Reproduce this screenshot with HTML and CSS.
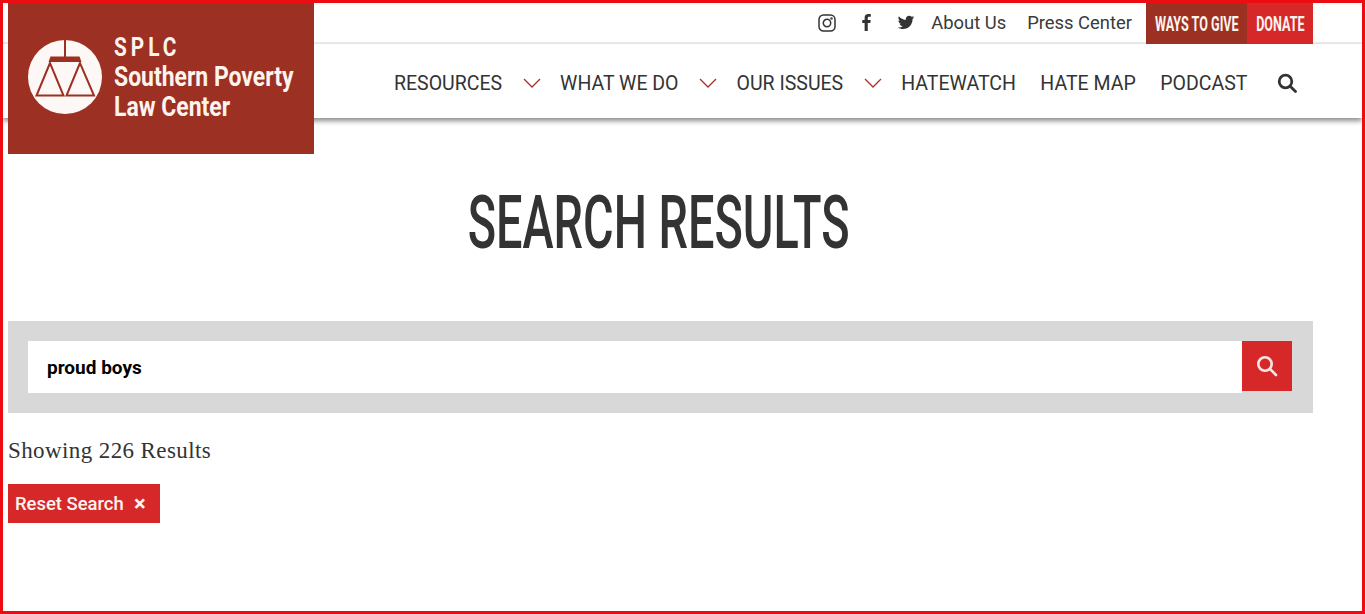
FILE: index.html
```html
<!DOCTYPE html>
<html lang="en">
<head>
    <meta charset="UTF-8">
    <meta name="viewport" content="width=device-width, initial-scale=1.0">
    <title>Search Results</title>
    <link rel="stylesheet" href="styles.css">
</head>
<body>
    <div class="frame">
        <header class="site-header">
            <a class="logo" href="#">
                <svg class="logo-mark" viewBox="0 0 74 74" width="74" height="74">
                    <circle cx="37" cy="37" r="37" fill="#fdf8f5"/>
                    <path d="M37 0V17" stroke="#9c3022" stroke-width="2" fill="none"/>
                    <path d="M20.500 22L22.500 16.500H51.500L53.500 22Z" fill="#9c3022"/>
                    <path d="M22 23L8.500 55.500H35.500ZM52 23L38.500 55.500H66Z" fill="none" stroke="#9c3022" stroke-width="2"/>
                </svg>
                <div class="logo-text">
                    <span class="logo-splc">SPLC</span>
                    <span class="logo-line">Southern Poverty</span>
                    <span class="logo-line">Law Center</span>
                </div>
            </a>

            <div class="top-bar">
                <a class="social social-wide" href="#" aria-label="Instagram">
                    <svg viewBox="0 0 18 18" width="18" height="18" fill="none" stroke="#333" stroke-width="1.500">
                        <rect x="1" y="1" width="16" height="16" rx="4.500"/>
                        <circle cx="9" cy="9" r="3.700"/>
                        <circle cx="13.500" cy="4.500" r="0.500"/>
                    </svg>
                </a>
                <a class="social" href="#" aria-label="Facebook">
                    <svg viewBox="0 0 12 20" width="12" height="19" fill="#333">
                        <path d="M3.500 19V10.500H1V7.300H3.500V5C3.500 2.300 5 1 7.400 1C8.500 1 9.600 1.100 10 1.200V4H8.300C7.100 4 6.800 4.600 6.800 5.500V7.300H9.900L9.500 10.500H6.800V19Z"/>
                    </svg>
                </a>
                <a class="social social-last" href="#" aria-label="Twitter">
                    <svg viewBox="0 0 24 24" width="19" height="19" fill="#333">
                        <path d="M23 5.100c-.8.4-1.700.6-2.600.7.900-.6 1.600-1.400 2-2.500-.9.500-1.900.9-2.900 1.100C18.700 3.500 17.500 3 16.200 3c-2.500 0-4.500 2-4.500 4.500 0 .4 0 .7.100 1C8 8.300 4.700 6.500 2.500 3.800c-.4.700-.6 1.400-.6 2.300 0 1.600.8 2.900 2 3.700-.7 0-1.400-.2-2-.6v.1c0 2.200 1.600 4 3.600 4.400-.4.100-.8.200-1.200.2-.3 0-.6 0-.8-.1.600 1.800 2.200 3.100 4.200 3.100-1.500 1.200-3.500 1.900-5.600 1.900-.4 0-.7 0-1.100-.1 2 1.300 4.400 2 6.900 2 8.300 0 12.800-6.900 12.800-12.800v-.6c.9-.6 1.700-1.400 2.300-2.200z"/>
                    </svg>
                </a>
                <a class="top-link" href="#">About Us</a>
                <a class="top-link top-link-last" href="#">Press Center</a>
                <a class="cta cta-give" href="#"><span>WAYS TO GIVE</span></a>
                <a class="cta cta-donate" href="#"><span>DONATE</span></a>
            </div>

            <nav class="main-nav">
                <a class="nav-link" href="#">RESOURCES</a>
                <svg class="chevron" viewBox="0 0 18 10" width="18" height="10"><path d="M1 1L9 9L17 1" fill="none" stroke="#a8322a" stroke-width="1.300"/></svg>
                <a class="nav-link" href="#">WHAT WE DO</a>
                <svg class="chevron" viewBox="0 0 18 10" width="18" height="10"><path d="M1 1L9 9L17 1" fill="none" stroke="#a8322a" stroke-width="1.300"/></svg>
                <a class="nav-link" href="#">OUR ISSUES</a>
                <svg class="chevron" viewBox="0 0 18 10" width="18" height="10"><path d="M1 1L9 9L17 1" fill="none" stroke="#a8322a" stroke-width="1.300"/></svg>
                <a class="nav-link" href="#">HATEWATCH</a>
                <a class="nav-link plain" href="#">HATE MAP</a>
                <a class="nav-link plain" href="#">PODCAST</a>
                <svg class="nav-search" viewBox="0 0 20 20" width="20" height="20" fill="none" stroke="#333" stroke-width="2.800">
                    <circle cx="8.500" cy="8.500" r="6.300"/>
                    <path d="M13.200 13.200L18.500 18.500" stroke-linecap="round"/>
                </svg>
            </nav>
        </header>

        <main class="content">
            <h1 class="page-title"><span>SEARCH RESULTS</span></h1>

            <form class="search-box">
                <input class="search-input" type="text" value="proud boys">
                <button class="search-button" type="button" aria-label="Search">
                    <svg viewBox="0 0 22 22" width="22" height="22" fill="none" stroke="#fbe6e4" stroke-width="2.600">
                        <circle cx="9" cy="9" r="6.700"/>
                        <path d="M14 14L20 20" stroke-linecap="round"/>
                    </svg>
                </button>
            </form>

            <p class="result-count">Showing 226 Results</p>
            <a class="reset" href="#"><span>Reset Search</span><b>×</b></a>
        </main>
    </div>
</body>
</html>
```

FILE: styles.css
```css
html, body {
    margin: 0;
    padding: 0;
}

body {
    font-family: Roboto, 'Liberation Sans', sans-serif;
    color: #333333;
    background: #ffffff;
}

a {
    color: inherit;
    text-decoration: none;
}

.frame {
    box-sizing: border-box;
    height: 614px;
    border: 3px solid #ec0c12;
    overflow: hidden;
}

.site-header {
    position: relative;
}

.logo {
    position: absolute;
    left: 5px;
    top: 0;
    box-sizing: border-box;
    width: 306px;
    height: 151px;
    padding: 29px 0 0 20px;
    display: flex;
    gap: 12px;
    background: #9c3022;
    color: #fdf4ef;
    z-index: 2;
}

.logo-mark {
    flex-shrink: 0;
    margin-top: 8px;
}

.logo-text {
    display: flex;
    flex-direction: column;
    font-weight: 700;
    font-size: 27px;
    line-height: 30px;
    white-space: nowrap;
}

.logo-splc {
    letter-spacing: 5px;
    transform: scaleX(0.8);
    transform-origin: left;
    font-size: 26px;
}

.logo-line {
    transform: scaleX(0.85);
    transform-origin: left;
}

.top-bar {
    height: 39px;
    padding-right: 49px;
    display: flex;
    justify-content: flex-end;
    align-items: center;
    border-bottom: 2px solid #eeeeee;
}

.social {
    display: flex;
    align-items: center;
    justify-content: center;
    width: 18px;
    margin-right: 21px;
}

.social-wide {
    margin-right: 22px;
}

.social-last {
    margin-right: 16px;
}

.top-link {
    font-size: 18.400px;
    margin-right: 21px;
    color: #3a3a3a;
}

.top-link-last {
    margin-right: 14px;
}

.cta {
    height: 41px;
    margin-bottom: -2px;
    display: flex;
    align-items: center;
    justify-content: center;
    color: #fdf4ef;
    font-size: 21px;
    font-weight: 700;
    white-space: nowrap;
}

.cta span {
    display: inline-block;
    transform: scaleX(0.6);
}

.cta-give {
    width: 101px;
    background: #9c3022;
}

.cta-donate {
    width: 66px;
    background: #d62829;
}

.main-nav {
    box-sizing: border-box;
    height: 74px;
    padding: 4px 0 0 391px;
    display: flex;
    align-items: center;
    background: #ffffff;
    box-shadow: 0 3px 5px rgba(0, 0, 0, 0.45);
    font-size: 19.500px;
    color: #333333;
}

.chevron {
    margin: 0 19.500px 0 20.500px;
}

.nav-link.plain {
    margin-left: 24.500px;
}

.nav-search {
    margin-left: 30px;
}

.content {
    padding: 67px 49px 0 5px;
}

.page-title {
    margin: 0 3px 60px 0;
    height: 76px;
    font-size: 74px;
    line-height: 76px;
    font-weight: 500;
    text-align: center;
    color: #333333;
}

.page-title span {
    display: inline-block;
    transform: scaleX(0.633);
    white-space: nowrap;
}

.search-box {
    height: 92px;
    box-sizing: border-box;
    padding: 20px 21px 0 20px;
    display: flex;
    align-items: flex-start;
    background: #d8d8d8;
}

.search-input {
    flex: 1;
    height: 52px;
    box-sizing: border-box;
    padding: 0 19px;
    border: none;
    outline: none;
    background: #ffffff;
    color: #000000;
    font-family: Roboto, 'Liberation Sans', sans-serif;
    font-size: 19px;
    font-weight: 700;
}

.search-button {
    width: 50px;
    height: 50px;
    padding: 0;
    border: none;
    display: flex;
    align-items: center;
    justify-content: center;
    background: #d62829;
}

.result-count {
    margin: 25px 0 20px;
    font-family: 'Liberation Serif', serif;
    font-size: 23px;
    line-height: 26px;
    letter-spacing: 0.400px;
    color: #333333;
}

.reset {
    display: flex;
    align-items: center;
    box-sizing: border-box;
    width: 152px;
    height: 39px;
    padding-left: 7px;
    background: #d62829;
    color: #fdf4ef;
    font-size: 19px;
    font-weight: 500;
    white-space: nowrap;
}

.reset span {
    display: inline-block;
    width: 108px;
    transform: scaleX(0.97);
    transform-origin: left;
}

.reset b {
    margin-left: 11px;
    font-size: 22px;
}
```
